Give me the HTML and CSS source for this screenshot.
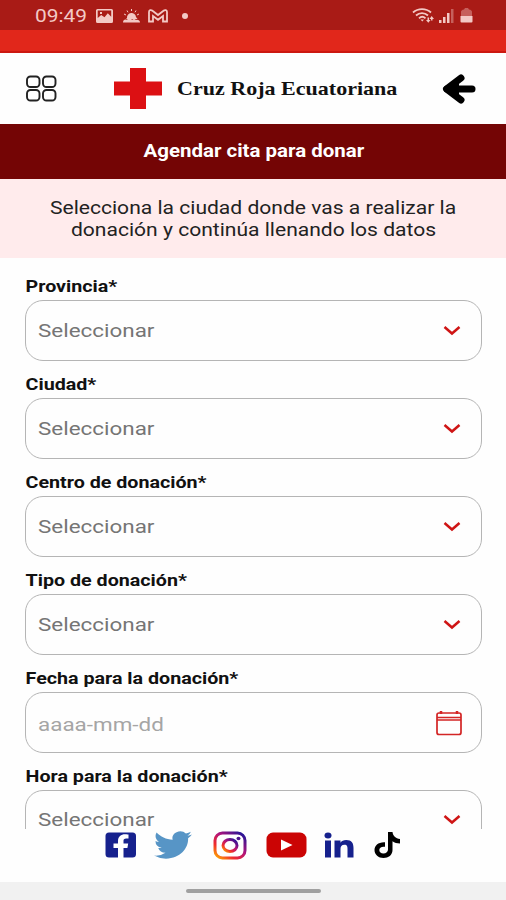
FILE: index.html
```
<!doctype html>
<html lang="es">
    <head>
        <meta charset="UTF-8" />
        <meta name="viewport" content="width=device-width, initial-scale=1.0" />
        <title>Agendar cita para donar - Cruz Roja Ecuatoriana</title>
        <link rel="stylesheet" href="styles.css">
    </head>
    <body>
        <div class="status-bar">
            <span class="time">09:49</span>
            <svg class="status-image" width="17" height="14" viewBox="0 0 17 14">
                <path fill-rule="evenodd" d="M1.500 0h14A1.500 1.500 0 0 1 17 1.500v11a1.500 1.500 0 0 1-1.500 1.500h-14A1.500 1.500 0 0 1 0 12.500v-11A1.500 1.500 0 0 1 1.500 0zM1.700 1.500v7.500l3.500-3 3.300 2.300 3.300-4 3.400 3.500V1.500zM4 3h2v2H4z"/>
            </svg>
            <svg class="status-weather" width="17" height="14" viewBox="0 0 17 14">
                <path d="M4 9a4.500 4.500 0 0 1 9-1l1.500 2H3z"/>
                <path d="M0 13.500c0-2.500 2-3.500 4-2.500 1-2.500 4-2.500 5 0 1-1.500 3-1.500 4 0 2-.5 4 .5 4 2.500z"/>
                <path class="rays" d="M8.500 0v2M4 1.500l1 1.800M13 1.500l-1 1.800M1 5l2 1M16 5l-2 1"/>
            </svg>
            <svg class="status-mail" width="20" height="14" viewBox="0 0 20 14">
                <path d="M1 12.500V3c0-2 2-2.500 3.500-1.200L10 6l5.500-4.200C17 .5 19 1 19 3v9.500h-4V7l-5 3.800L5 7v5.500z"/>
            </svg>
            <span class="status-dot"></span>
            <svg class="status-wifi" width="23" height="15" viewBox="0 0 23 15">
                <path d="M1 4.500c5-4.600 13-4.600 18 0M4 7.500c3.500-3.300 8.500-3.300 12 0M7 10.300c2-1.900 4.500-1.900 6.500 0"/>
                <path class="solid" d="M8.500 11.500h3.500l-1.700 2zM14 12h1.500V9.500h1.500V12h1.500l-2.200 2.800zM17.500 11l2.200-3 2.300 3h-1.500v1.500H19V11z"/>
            </svg>
            <svg class="status-signal" width="16" height="15" viewBox="0 0 16 15">
                <path d="M1 12h2.500v3H1zM5 9h2.500v6H5zM9 5h2.500v10H9z"/>
                <path class="faded" d="M13 1h2.500v14H13z"/>
            </svg>
            <svg class="status-battery" width="13" height="15" viewBox="0 0 13 15">
                <path class="faded" d="M1 8V4q0-2 3-2.500L5 0h3l1 1.500Q12 2 12 4v4z"/>
                <path d="M0.500 8h12v5.500q0 1-1 1h-10q-1 0-1-1z"/>
            </svg>
        </div>
        <div class="red-bar"></div>

        <header class="header">
            <svg class="menu-icon" width="32" height="28" viewBox="0 0 32 28">
                <rect x="2" y="1.500" width="12.500" height="10.500" rx="3.500"/>
                <rect x="18" y="1.500" width="12.500" height="10.500" rx="3.500"/>
                <rect x="2" y="15" width="12.500" height="10.500" rx="3.500"/>
                <rect x="18" y="15" width="12.500" height="10.500" rx="3.500"/>
            </svg>
            <svg class="cross" width="48" height="41" viewBox="0 0 48 41">
                <path d="M16 0h16v13.500h16v14H32V41H16V27.500H0v-14h16z"/>
            </svg>
            <span class="brand">Cruz Roja Ecuatoriana</span>
            <svg class="back-icon" width="34" height="30" viewBox="0 0 34 30">
                <path d="M19 4 4.500 15 19 26"/>
                <path d="M5 15h25"/>
                <path class="tip" d="M17 5.500 4.500 15 17 24.500z"/>
            </svg>
        </header>

        <h1 class="title"><span>Agendar cita para donar</span></h1>
        <p class="intro">
            <span>Selecciona la ciudad donde vas a realizar la</span><br />
            <span>donación y continúa llenando los datos</span>
        </p>

        <main class="form">
            <label class="field">
                <span class="label">Provincia*</span>
                <span class="box"><span class="value">Seleccionar</span><svg class="chevron" width="18" height="11" viewBox="0 0 18 11"><path d="M1.500 2 9 8.500 16.500 2"/></svg></span>
            </label>
            <label class="field">
                <span class="label">Ciudad*</span>
                <span class="box"><span class="value">Seleccionar</span><svg class="chevron" width="18" height="11" viewBox="0 0 18 11"><path d="M1.500 2 9 8.500 16.500 2"/></svg></span>
            </label>
            <label class="field">
                <span class="label">Centro de donación*</span>
                <span class="box"><span class="value">Seleccionar</span><svg class="chevron" width="18" height="11" viewBox="0 0 18 11"><path d="M1.500 2 9 8.500 16.500 2"/></svg></span>
            </label>
            <label class="field">
                <span class="label">Tipo de donación*</span>
                <span class="box"><span class="value">Seleccionar</span><svg class="chevron" width="18" height="11" viewBox="0 0 18 11"><path d="M1.500 2 9 8.500 16.500 2"/></svg></span>
            </label>
            <label class="field">
                <span class="label">Fecha para la donación*</span>
                <span class="box date">
                    <span class="value">aaaa-mm-dd</span>
                    <svg class="calendar" width="26" height="26" viewBox="0 0 26 26">
                        <rect x="1" y="3" width="24" height="21.500" rx="2"/>
                        <path d="M1 7.500h24M1 10h24"/>
                        <path class="rings" d="M5 1v3M21 1v3"/>
                    </svg>
                </span>
            </label>
            <label class="field last">
                <span class="label">Hora para la donación*</span>
                <span class="box"><span class="value">Seleccionar</span><svg class="chevron" width="18" height="11" viewBox="0 0 18 11"><path d="M1.500 2 9 8.500 16.500 2"/></svg></span>
            </label>
        </main>

        <footer class="social">
            <svg class="facebook" width="32" height="26" viewBox="0 0 32 26">
                <rect x="0.500" y="0.500" width="30.500" height="25" rx="3.500" fill="#16218d"/>
                <path fill="#fff" d="M13 26V16H8.500v-4.500H13V9c0-4.500 3-6.800 7-6.800 2 0 3.500.3 3.500.3v4h-2.300c-2 0-2.700 1-2.700 2.200v2.800h4.700l-.8 4.500h-3.900v10z"/>
            </svg>
            <svg class="twitter" width="38" height="28" viewBox="0 0 24 20" preserveAspectRatio="none">
                <path fill="#5795c6" d="M23.950 2.570a10 10 0 0 1-2.820.770 4.960 4.960 0 0 0 2.160-2.720c-.950.550-2 .950-3.130 1.180a4.920 4.920 0 0 0-8.380 4.480C7.690 6.090 4.070 4.130 1.640 1.160a4.820 4.820 0 0 0-.670 2.480c0 1.710.870 3.210 2.190 4.100a4.900 4.900 0 0 1-2.230-.620v.060a4.920 4.920 0 0 0 3.950 4.830 5 5 0 0 1-2.210.080 4.940 4.940 0 0 0 4.600 3.420A9.870 9.870 0 0 1 0 17.540a14 14 0 0 0 7.560 2.210c9.050 0 14-7.500 14-13.980 0-.210 0-.420-.020-.630a9.900 9.900 0 0 0 2.410-2.570z"/>
            </svg>
            <svg class="instagram" width="34" height="29" viewBox="0 0 34 29">
                <defs>
                    <linearGradient id="ig" x1="0" y1="1" x2="0.9" y2="0">
                        <stop offset="0" stop-color="#ffb000"/>
                        <stop offset="0.300" stop-color="#f02c2c"/>
                        <stop offset="0.600" stop-color="#b0147c"/>
                        <stop offset="1" stop-color="#241496"/>
                    </linearGradient>
                </defs>
                <g fill="none" stroke="url(#ig)" stroke-width="3">
                    <rect x="2" y="2" width="30" height="25" rx="7.500"/>
                    <ellipse cx="17" cy="14.500" rx="7" ry="6"/>
                </g>
                <ellipse cx="25.500" cy="7.500" rx="2" ry="1.700" fill="#4a128f"/>
            </svg>
            <svg class="youtube" width="41" height="26" viewBox="0 0 41 26">
                <rect x="0.500" y="0.500" width="40" height="25" rx="6.500" fill="#cb0404"/>
                <path fill="#fff" d="M15 7.500v11L26.500 13z"/>
            </svg>
            <svg class="linkedin" width="30" height="26" viewBox="0 0 30 26">
                <g fill="#16218d">
                    <ellipse cx="4" cy="3.500" rx="3.500" ry="3"/>
                    <path d="M1 8.500h6V25.500H1zM10.500 8.500h6v2.300c1-1.600 3-2.700 5.700-2.700 5.600 0 7.300 3 7.300 8v9.400h-6v-8.500c0-2.200-.3-4.200-3-4.200-3 0-4 1.900-4 4.200v8.500h-6z"/>
                </g>
            </svg>
            <svg class="tiktok" width="27" height="28" viewBox="0 0 27 28">
                <path d="M14 1h4.500c.5 4 3 6.500 7.500 7v4.500c-3 0-5.500-1-7.500-2.300V19c0 5-4 8-9 8S.5 23.500.5 19s4-8.300 10.500-7.800v4.600c-3.500-.6-5.700 1-5.700 3.300 0 2 1.700 3.500 4 3.500 3 0 4.700-1.700 4.700-4z"/>
            </svg>
        </footer>
        <div class="nav-bar"><span class="handle"></span></div>
    </body>
</html>
```
FILE: styles.css
```
* {
    margin: 0;
    padding: 0;
    box-sizing: border-box;
}

body {
    font-family: Roboto, "Liberation Sans", sans-serif;
    background: #fefefe;
    height: 900px;
    overflow: hidden;
    display: flex;
    flex-direction: column;
}

svg {
    display: block;
    flex: none;
}

.status-bar {
    height: 30px;
    flex: none;
    background: #a91b16;
    padding: 1px 33px 0 35px;
    display: flex;
    align-items: center;
}

.status-bar svg {
    fill: #f3c9c5;
}

.time {
    font-size: 19px;
    width: 52px;
    white-space: nowrap;
    color: #f3c9c5;
    transform: scaleX(1.1);
    transform-origin: left;
}

.status-image {
    margin-left: 9px;
}

.status-weather {
    margin-left: 10px;
}

.rays {
    stroke: #f3c9c5;
}

.status-mail {
    margin-left: 8px;
}

.status-bar .status-mail {
    fill: none;
    stroke: #f3c9c5;
    stroke-width: 1.8;
}

.status-dot {
    width: 6px;
    height: 6px;
    margin-left: 14px;
    border-radius: 50%;
    background: #f3c9c5;
}

.status-bar .status-wifi {
    margin-left: auto;
    fill: none;
    stroke: #f3c9c5;
    stroke-width: 1.8;
}

.status-bar .status-wifi .solid {
    fill: #f3c9c5;
    stroke: none;
}

.status-signal {
    margin-left: 3px;
}

.status-battery {
    margin-left: 6px;
}

.faded {
    opacity: 0.4;
}

.red-bar {
    height: 23px;
    flex: none;
    background: #e1271b;
    border-bottom: 2px solid #cc1810;
}

.header {
    height: 71px;
    flex: none;
    display: flex;
    align-items: center;
    padding: 0 30px 0 25px;
}

.menu-icon {
    fill: none;
    stroke: #222;
    stroke-width: 1.9;
}

.cross {
    margin-left: 57px;
    fill: #dc1013;
}

.brand {
    width: 220px;
    margin-left: 15px;
    font: bold 19px "Liberation Serif", serif;
    white-space: nowrap;
    color: #111;
    transform: scaleX(1.16);
    transform-origin: left;
}

.back-icon {
    margin-left: auto;
    fill: none;
    stroke: #000;
    stroke-width: 7;
    stroke-linecap: round;
    stroke-linejoin: round;
}

.back-icon .tip {
    fill: #000;
    stroke: none;
}

.title {
    height: 55px;
    flex: none;
    background: #740505;
    color: #fff;
    font-size: 17.5px;
    line-height: 54px;
    text-align: center;
}

.title span,
.intro span {
    display: inline-block;
    transform: translateX(0.5px) scaleX(1.17);
}

.intro {
    height: 79px;
    flex: none;
    padding-top: 18px;
    background: #ffebec;
    color: #222;
    font-size: 18px;
    line-height: 22px;
    text-align: center;
    white-space: nowrap;
}

.form {
    height: 571px;
    flex: none;
    padding: 17px 24px 0 25px;
    overflow: hidden;
}

.field {
    display: block;
    height: 98px;
}

.label {
    display: block;
    height: 25px;
    font-size: 17px;
    font-weight: bold;
    line-height: 23px;
    color: #111;
    padding-left: 0.5px;
    transform: scaleX(1.157);
    transform-origin: left;
}

.box {
    display: flex;
    align-items: center;
    justify-content: space-between;
    height: 61px;
    padding: 0 20px 0 11.5px;
    border: 1.5px solid #b5b5b5;
    border-radius: 18px;
}

.value {
    font-size: 19px;
    color: #757575;
    transform: scaleX(1.18);
    transform-origin: left;
}

.chevron {
    fill: none;
    stroke: #cf1515;
    stroke-width: 2.5;
}

.date {
    padding-right: 19px;
}

.date .value {
    color: #a5a5a5;
    padding-top: 4px;
}

.calendar {
    fill: none;
    stroke: #d32525;
    stroke-width: 1.7;
}

.rings {
    stroke-width: 2.5;
}

.last .box {
    padding-bottom: 2px;
}

.social {
    height: 53px;
    flex: none;
    display: flex;
    align-items: center;
    padding: 0 0 21px 105px;
}

.twitter {
    margin-left: 17px;
}

.instagram {
    margin-left: 21px;
}

.youtube {
    margin-left: 19px;
}

.linkedin {
    margin-left: 17px;
}

.tiktok {
    margin-left: 20px;
}

.nav-bar {
    height: 18px;
    flex: none;
    display: flex;
    align-items: center;
    justify-content: center;
    background: #f1f1f1;
}

.handle {
    width: 135px;
    height: 4px;
    border-radius: 2px;
    background: #a0a0a0;
}
```
